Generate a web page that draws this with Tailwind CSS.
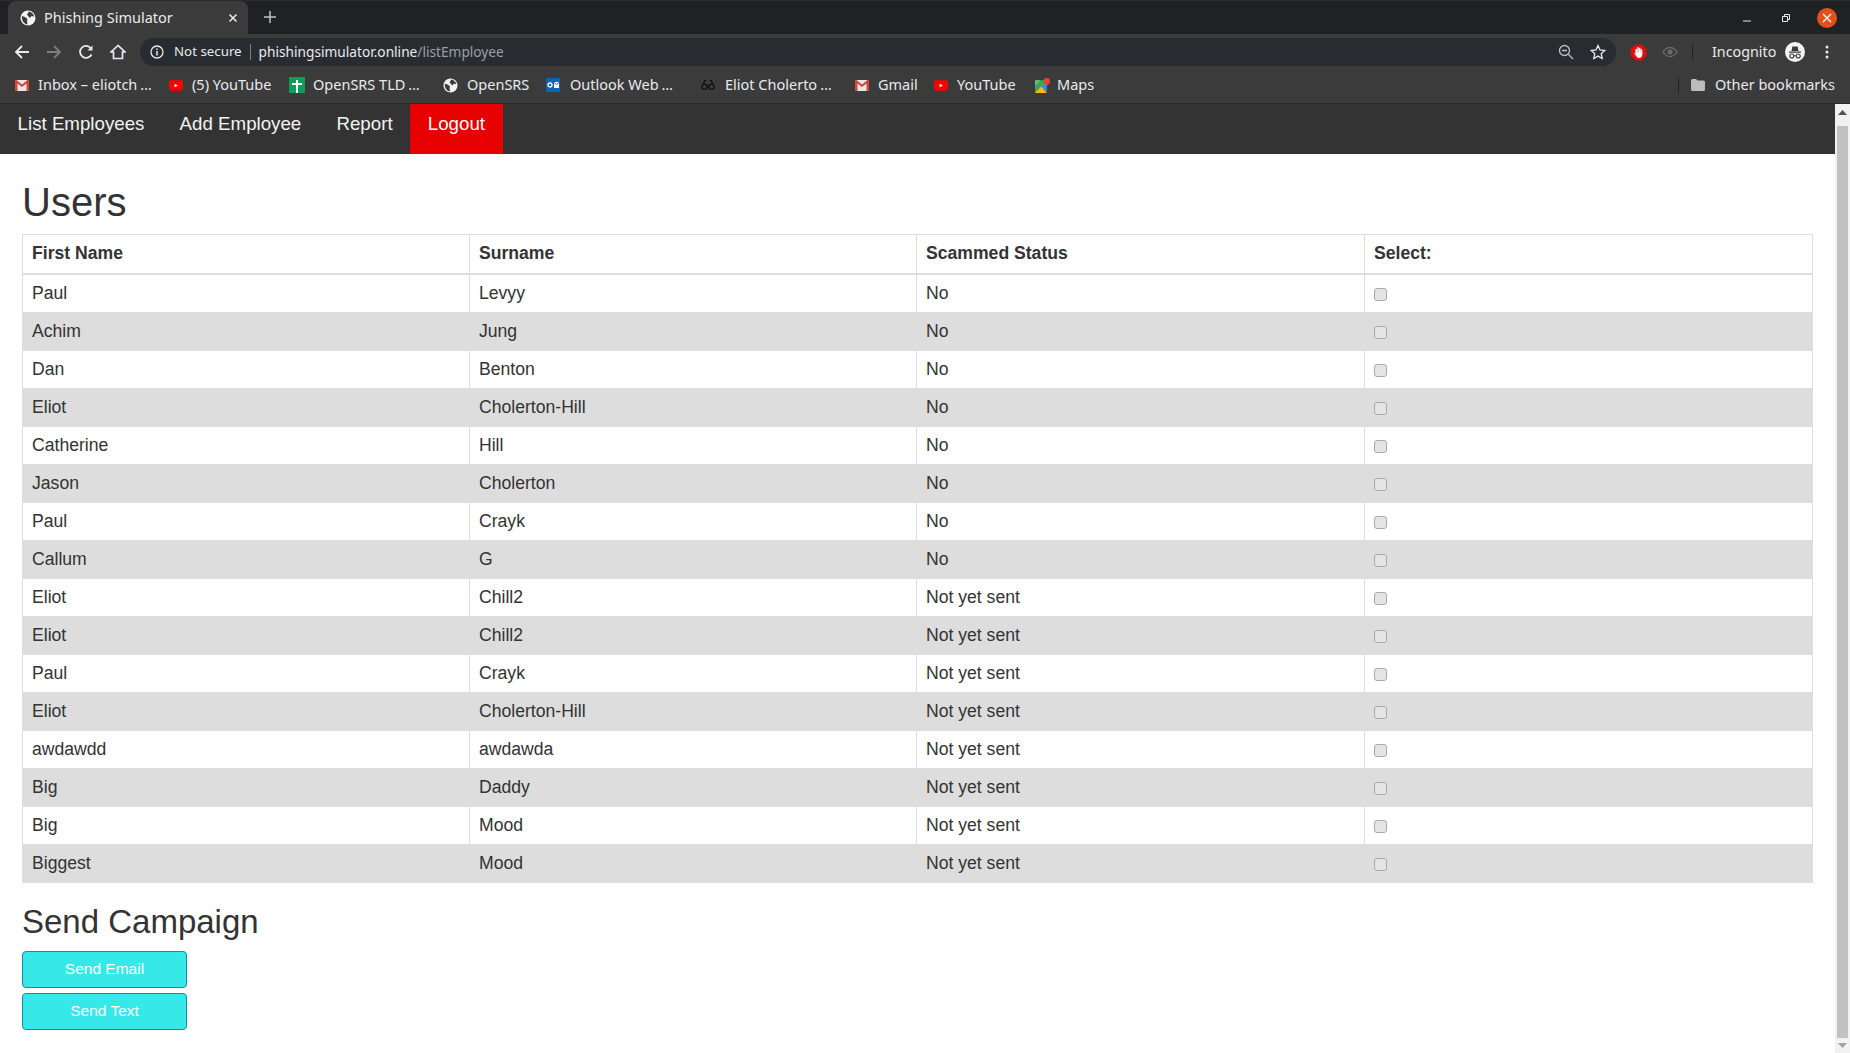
<!DOCTYPE html>
<html lang="en">
<head>
  <meta charset="UTF-8" />
  <title>Phishing Simulator</title>
  <script src="https://cdn.jsdelivr.net/npm/@tailwindcss/browser@4"></script>
</head>
<body class="h-[1053px] w-[1850px] overflow-hidden flex flex-col bg-white font-['Liberation_Sans',sans-serif] text-[#333]">

  <!-- Tab strip -->
  <div class="h-[34px] bg-[#202124] border-t border-[#2c2c2c] flex items-end pl-[8px] font-['Noto_Sans',sans-serif] text-[14.500px] text-[#e8eaed]">
    <div class="w-[240px] h-[33px] bg-[#3b3b3b] rounded-t-[8px] flex items-center pl-[12px] pr-[10px]">
      <svg class="w-[16px] h-[16px] shrink-0" viewBox="0 0 16 16"><circle cx="8" cy="8" r="7.500" fill="#f1f3f4"/><path d="M9 1.500c2.500.5 4.500 2.500 5.300 5L11.500 6 10 8 8.500 6.500 7 4.500zM2 6l3 1 2.500 2-.5 2 .5 3.500C4.500 14 2 11 2 8z" fill="#3b3b3b"/></svg>
      <span class="ml-[8px] grow">Phishing Simulator</span>
      <svg class="w-[10px] h-[10px]" viewBox="0 0 10 10"><path d="M1.500 1.500l7 7M8.500 1.500l-7 7" stroke="#e8eaed" stroke-width="1.500"/></svg>
    </div>
    <svg class="w-[14px] h-[14px] ml-[15px] mb-[10px]" viewBox="0 0 14 14"><path d="M7 1v12M1 7h12" stroke="#bdc1c6" stroke-width="1.500"/></svg>
    <div class="ml-auto flex items-center h-[33px]">
      <svg class="w-[10px] h-[10px] mr-[29px]" viewBox="0 0 10 10"><path d="M1 8h8" stroke="#e8eaed" stroke-width="1"/></svg>
      <svg class="w-[10px] h-[10px] mr-[26px]" viewBox="0 0 10 10"><path d="M1.500 3.500h5v5h-5zM3.500 3V1.500h5v5H7" fill="none" stroke="#e8eaed" stroke-width="1"/></svg>
      <div class="w-[20px] h-[20px] rounded-full bg-[#e2511c] flex items-center justify-center mr-[13px]">
        <svg class="w-[10px] h-[10px]" viewBox="0 0 10 10"><path d="M1 1l8 8M9 1l-8 8" stroke="#fff" stroke-width="1.300"/></svg>
      </div>
    </div>
  </div>

  <!-- Toolbar -->
  <div class="h-[36px] bg-[#3b3b3b] flex items-center font-['Noto_Sans',sans-serif] text-[13.300px] text-[#e8eaed]">
    <div class="flex items-center w-[140px] pl-[14px] gap-[16px]">
      <svg class="w-[16px] h-[16px]" viewBox="0 0 16 16"><path d="M15 8H2M8 2L2 8l6 6" fill="none" stroke="#e8eaed" stroke-width="1.800"/></svg>
      <svg class="w-[16px] h-[16px]" viewBox="0 0 16 16"><path d="M1 8h13M8 2l6 6-6 6" fill="none" stroke="#7c7d7e" stroke-width="1.800"/></svg>
      <svg class="w-[16px] h-[16px]" viewBox="0 0 16 16"><path d="M13.500 10.500A6 6 0 1 1 13 4.500" fill="none" stroke="#e8eaed" stroke-width="1.800"/><path d="M14.500 1.500v5h-5z" fill="#e8eaed"/></svg>
      <svg class="w-[16px] h-[16px]" viewBox="0 0 16 16"><path d="M8 1.500L1 8h2.500v6.500h9V8H15z" fill="none" stroke="#e8eaed" stroke-width="1.700"/></svg>
    </div>
    <div class="w-[1476px] h-[28px] bg-[#282c30] rounded-full flex items-center pl-[10px] pr-[10px]">
      <svg class="w-[14px] h-[14px]" viewBox="0 0 14 14"><circle cx="7" cy="7" r="6" fill="none" stroke="#e8eaed" stroke-width="1.300"/><path d="M7 6v4.500M7 3.500v1.500" stroke="#e8eaed" stroke-width="1.500"/></svg>
      <span class="ml-[10px]">Not secure</span>
      <span class="w-px h-[16px] bg-[#7c7d7e] mx-[8px]"></span>
      <span class="text-[13.700px]">phishingsimulator.online<span class="text-[#9aa0a6]">/listEmployee</span></span>
      <svg class="w-[16px] h-[16px] ml-auto" viewBox="0 0 16 16"><circle cx="6.500" cy="6.500" r="5" fill="none" stroke="#bdc1c6" stroke-width="1.300"/><path d="M4 6.500h5M10.300 10.300L15 15" stroke="#bdc1c6" stroke-width="1.300"/></svg>
      <svg class="w-[16px] h-[16px] ml-[16px]" viewBox="0 0 16 16"><path d="M8 1.500l2 4.500 4.800.5-3.600 3.200 1 4.800L8 12.100l-4.200 2.400 1-4.800L1.200 6.500 6 6z" fill="none" stroke="#e8eaed" stroke-width="1.300"/></svg>
    </div>
    <svg class="w-[17px] h-[17px] ml-[14px]" viewBox="0 0 17 17"><path d="M5.500.500h6l5 5v6l-5 5h-6l-5-5v-6z" fill="#e40c0c"/><path d="M6.200 9V5.500M8 9V3.800M9.800 9V4.500M11.500 9V6" stroke="#fff" stroke-width="1.500" stroke-linecap="round"/><path d="M5.500 8h6.800v2.500c0 2.200-1.500 3.500-3.200 3.500-1.500 0-2.300-.8-3-2L4.300 9.500l.7-.5 1 1z" fill="#fff"/></svg>
    <svg class="w-[16px] h-[12px] ml-[15px]" viewBox="0 0 16 12"><path d="M1 6c4-6 10-6 14 0-4 6-10 6-14 0z" fill="none" stroke="#6a6b6c" stroke-width="1.300"/><circle cx="8" cy="6" r="2.500" fill="#6a6b6c"/></svg>
    <span class="w-px h-[16px] bg-[#202124] ml-[14px]"></span>
    <span class="ml-[19px] text-[14.300px]">Incognito</span>
    <svg class="w-[20px] h-[20px] ml-[9px]" viewBox="0 0 20 20"><circle cx="10" cy="10" r="10" fill="#f1f3f4"/><path d="M4 9.500h12v1.200H4zM6.500 9l.8-4.500h5.400l.8 4.500z" fill="#3b3b3b"/><circle cx="6.800" cy="14" r="2" fill="none" stroke="#3b3b3b" stroke-width="1.100"/><circle cx="13.200" cy="14" r="2" fill="none" stroke="#3b3b3b" stroke-width="1.100"/><path d="M8.800 13.800h2.400" stroke="#3b3b3b" stroke-width="1"/></svg>
    <svg class="w-[4px] h-[14px] ml-[20px]" viewBox="0 0 4 14"><circle cx="2" cy="2" r="1.500" fill="#e8eaed"/><circle cx="2" cy="7" r="1.500" fill="#e8eaed"/><circle cx="2" cy="12" r="1.500" fill="#e8eaed"/></svg>
  </div>

  <!-- Bookmarks bar -->
  <div class="h-[34px] bg-[#3b3b3b] border-b border-[#28292a] flex items-center pb-[3px] font-['Noto_Sans',sans-serif] text-[14.500px] text-[#e8eaed] pr-[15px]">
    <div class="w-[169px] pl-[15px] flex items-center">
      <svg class="w-[14px] h-[11px] mr-[9px] shrink-0" viewBox="0 0 14 11"><rect width="14" height="11" fill="#e8e8e8"/><path d="M0 0v11h2.500V3.500L7 7l4.500-3.500V11H14V0h-1.500L7 4.500 1.500 0z" fill="#d44638"/></svg>
      <span>Inbox – eliotch<span class="ml-[3px]">…</span></span>
    </div>
    <div class="w-[120px] flex items-center">
      <svg class="w-[14px] h-[11px] mr-[9px] shrink-0" viewBox="0 0 15 11"><rect width="15" height="11" rx="2.500" fill="#f00"/><path d="M6 3.500v4l3.500-2z" fill="#fff"/></svg>
      <span>(5) YouTube</span>
    </div>
    <div class="w-[154px] flex items-center">
      <svg class="w-[16px] h-[16px] mr-[8px] shrink-0" viewBox="0 0 16 16"><rect width="16" height="16" rx="1" fill="#0f9d58"/><path d="M7 3h2v3h4v2H9v8H7V8H3V6h4z" fill="#fff"/></svg>
      <span>OpenSRS TLD<span class="ml-[3px]">…</span></span>
    </div>
    <div class="w-[103px] flex items-center">
      <svg class="w-[15px] h-[15px] mr-[9px] shrink-0" viewBox="0 0 16 16"><circle cx="8" cy="8" r="7.500" fill="#f1f3f4"/><path d="M9 1.500c2.500.5 4.500 2.500 5.300 5L11.500 6 10 8 8.500 6.500 7 4.500zM2 6l3 1 2.500 2-.5 2 .5 3.500C4.500 14 2 11 2 8z" fill="#3b3b3b"/></svg>
      <span>OpenSRS</span>
    </div>
    <div class="w-[155px] flex items-center">
      <svg class="w-[14px] h-[14px] mr-[10px] shrink-0" viewBox="0 0 14 14"><rect width="14" height="14" rx="1" fill="#0a64b8"/><circle cx="4" cy="7" r="2" fill="none" stroke="#fff" stroke-width="1.300"/><path d="M8 4h5v6H8z" fill="#fff"/><path d="M8 4.500l2.500 2 2.500-2" fill="none" stroke="#0a64b8" stroke-width="1"/></svg>
      <span>Outlook Web<span class="ml-[3px]">…</span></span>
    </div>
    <div class="w-[154px] flex items-center">
      <svg class="w-[14px] h-[12px] mr-[10px] shrink-0" viewBox="0 0 16 12"><circle cx="4" cy="8" r="3" fill="none" stroke="#111" stroke-width="1.500"/><circle cx="12" cy="8" r="3" fill="none" stroke="#111" stroke-width="1.500"/><path d="M3 5l1-4h2M13 5l-1-4h-2M6 7h4" fill="none" stroke="#111" stroke-width="1.500"/></svg>
      <span>Eliot Cholerto<span class="ml-[3px]">…</span></span>
    </div>
    <div class="w-[79px] flex items-center">
      <svg class="w-[14px] h-[11px] mr-[9px] shrink-0" viewBox="0 0 14 11"><rect width="14" height="11" fill="#e8e8e8"/><path d="M0 0v11h2.500V3.500L7 7l4.500-3.500V11H14V0h-1.500L7 4.500 1.500 0z" fill="#d44638"/></svg>
      <span>Gmail</span>
    </div>
    <div class="w-[101px] flex items-center">
      <svg class="w-[14px] h-[11px] mr-[9px] shrink-0" viewBox="0 0 15 11"><rect width="15" height="11" rx="2.500" fill="#f00"/><path d="M6 3.500v4l3.500-2z" fill="#fff"/></svg>
      <span>YouTube</span>
    </div>
    <div class="flex items-center">
      <svg class="w-[15px] h-[15px] mr-[7px] shrink-0" viewBox="0 0 14 14"><path d="M0 2h9v12H0z" fill="#34a853"/><path d="M0 14l6-6 5 6z" fill="#fbbc04"/><path d="M6 8l5-5v11z" fill="#4285f4"/><path d="M0 2h5L0 7z" fill="#7fb77e"/><path d="M11 0a3 3 0 0 1 3 3c0 2-3 4.500-3 4.500S8 5 8 3a3 3 0 0 1 3-3z" fill="#ea4335"/></svg>
      <span>Maps</span>
    </div>
    <div class="ml-auto flex items-center">
      <span class="w-px h-[16px] bg-[#202124] mr-[12px]"></span>
      <svg class="w-[14px] h-[12px] mr-[10px]" viewBox="0 0 14 12"><path d="M0 1.500A1.500 1.500 0 0 1 1.500 0H5l1.500 1.500h6A1.500 1.500 0 0 1 14 3v7.500a1.500 1.500 0 0 1-1.500 1.500h-11A1.500 1.500 0 0 1 0 10.500z" fill="#bdbdbd"/></svg>
      <span>Other bookmarks</span>
    </div>
  </div>

  <div class="flex grow min-h-0">
    <div class="grow min-w-0">
      <!-- Site nav -->
      <nav class="h-[50px] bg-[#333] flex text-[18.720px] text-[#f2f2f2]">
        <a class="px-[17.600px] flex items-center pb-[9px]">List Employees</a>
        <a class="px-[17.600px] flex items-center pb-[9px]">Add Employee</a>
        <a class="px-[17.600px] flex items-center pb-[9px]">Report</a>
        <a class="px-[17.600px] flex items-center pb-[9px] bg-[#e60000] text-white">Logout</a>
      </nav>

      <main class="px-[22px]">
        <h1 class="text-[40px] leading-[46px] mt-[25px] mb-[9px]">Users</h1>
        <table class="w-[1790px] table-fixed border-collapse text-[17.600px] leading-[21px]">
          <thead>
            <tr class="font-bold text-left">
              <th class="w-[447px] border border-[#ddd] border-b-2 px-[9px] py-[8px] h-[39px]">First Name</th>
              <th class="w-[447px] border border-[#ddd] border-b-2 px-[9px] py-[8px]">Surname</th>
              <th class="w-[448px] border border-[#ddd] border-b-2 px-[9px] py-[8px]">Scammed Status</th>
              <th class="w-[448px] border border-[#ddd] border-b-2 px-[9px] py-[8px]">Select:</th>
            </tr>
          </thead>
          <tbody id="rows"></tbody>
        </table>

        <h2 class="text-[33px] leading-[38px] mt-[20px] mb-[10px]">Send Campaign</h2>
        <div class="flex flex-col gap-[5px] items-start">
          <button class="w-[165px] h-[37px] bg-[#36e8e8] border border-[#0e8fa8] rounded-[4px] text-white text-[15.500px]">Send Email</button>
          <button class="w-[165px] h-[37px] bg-[#36e8e8] border border-[#0e8fa8] rounded-[4px] text-white text-[15.500px]">Send Text</button>
        </div>
      </main>
    </div>

    <!-- Scrollbar -->
    <div class="w-[15px] bg-[#f1f1f1] flex flex-col items-center shrink-0">
      <svg class="w-[9px] h-[5px] mt-[6px] mb-[11px]" viewBox="0 0 9 5"><path d="M4.500 0L9 5H0z" fill="#505050"/></svg>
      <div class="w-[11px] grow bg-[#c1c1c1]"></div>
      <svg class="w-[9px] h-[5px] mt-[5px] mb-[5px]" viewBox="0 0 9 5"><path d="M4.500 5L9 0H0z" fill="#a3a3a3"/></svg>
    </div>
  </div>

  <script>
    const employees = [
      ["Paul", "Levyy", "No"],
      ["Achim", "Jung", "No"],
      ["Dan", "Benton", "No"],
      ["Eliot", "Cholerton-Hill", "No"],
      ["Catherine", "Hill", "No"],
      ["Jason", "Cholerton", "No"],
      ["Paul", "Crayk", "No"],
      ["Callum", "G", "No"],
      ["Eliot", "Chill2", "Not yet sent"],
      ["Eliot", "Chill2", "Not yet sent"],
      ["Paul", "Crayk", "Not yet sent"],
      ["Eliot", "Cholerton-Hill", "Not yet sent"],
      ["awdawdd", "awdawda", "Not yet sent"],
      ["Big", "Daddy", "Not yet sent"],
      ["Big", "Mood", "Not yet sent"],
      ["Biggest", "Mood", "Not yet sent"],
    ];

    const cell = "border border-[#ddd] px-[9px] py-[8px] h-[38px]";

    document.getElementById("rows").innerHTML = employees.map(([first, last, status]) => `
      <tr class="even:bg-[#ddd]">
        <td class="${cell}">${first}</td>
        <td class="${cell}">${last}</td>
        <td class="${cell}">${status}</td>
        <td class="${cell}"><input type="checkbox" disabled class="appearance-none block w-[13px] h-[13px] mt-[3px] border border-[#aaa] bg-[#e4e4e4] rounded-[3px]"></td>
      </tr>`).join("");
  </script>
</body>
</html>
